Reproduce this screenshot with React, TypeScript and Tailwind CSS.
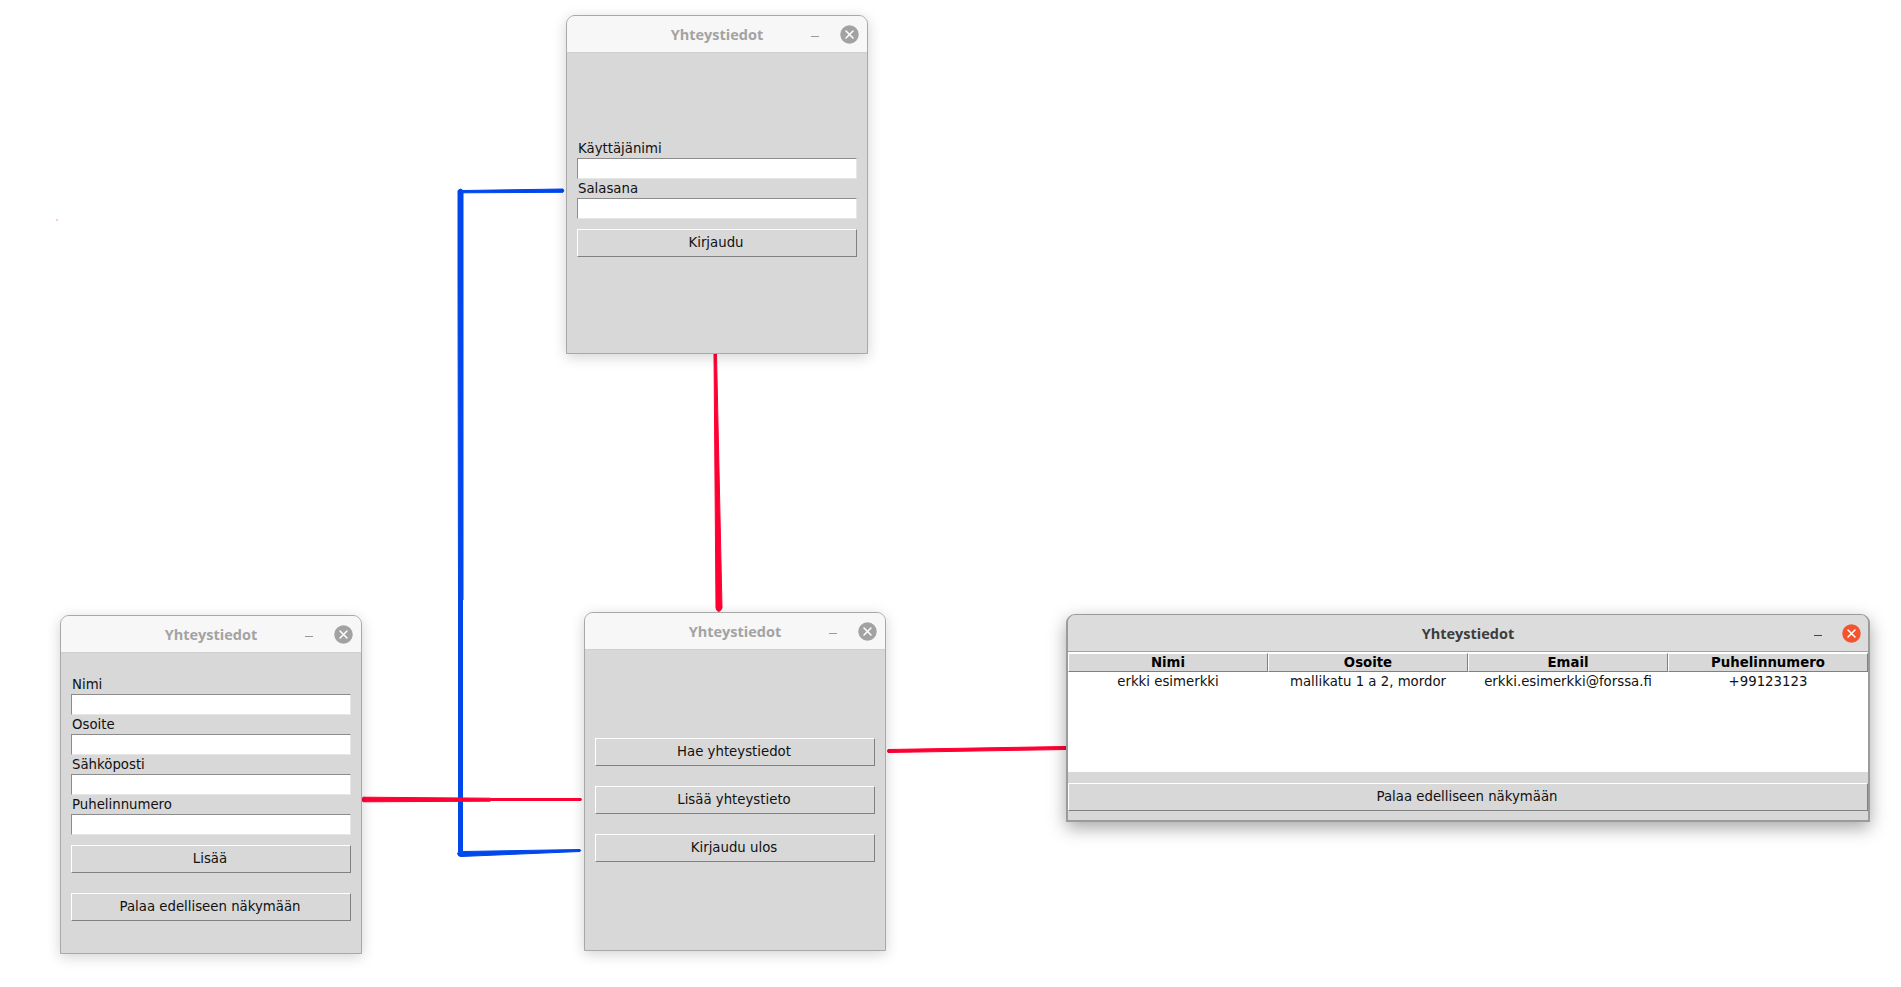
import React from "react";

const uiFont = "font-['DejaVu_Sans',sans-serif] text-[13.3px] text-[#111]";

const CloseIcon = ({ active }: { active?: boolean }) => (
  <svg width="19" height="19" viewBox="0 0 19 19">
    <circle cx="9.5" cy="9.5" r="9.25" fill={active ? "#f2542e" : "#a2a2a2"} />
    <path d="M6 6l7 7M13 6l-7 7" stroke="#fff" strokeWidth="1.5" strokeLinecap="round" />
  </svg>
);

const Window: React.FC<{
  className: string;
  active?: boolean;
  children: React.ReactNode;
}> = ({ className, active, children }) => (
  <div
    className={`absolute flex flex-col rounded-t-[9px] bg-[#d8d8d8] ${
      active
        ? "border-2 border-t border-[#9b9b9b] shadow-[0_6px_18px_rgb(0_0_0/35%)]"
        : "border border-[#a8a8a8] shadow-[0_3px_14px_rgb(0_0_0/18%)]"
    } ${className}`}
  >
    <div
      className={`relative flex h-[37px] shrink-0 items-center justify-center rounded-t-[8px] border-b pt-px font-['Open_Sans',sans-serif] text-[14.5px] font-bold ${
        active ? "border-[#a4a4a4] bg-[#dcdcdc] text-[#3d3d3d]" : "border-[#cfcfcf] bg-[#f7f7f7] text-[#a3a3a3]"
      }`}
    >
      Yhteystiedot
      <span
        className={`absolute top-[20px] h-px w-[8px] ${active ? "right-[46px] bg-[#444]" : "right-[48px] bg-[#9a9a9a]"}`}
      />
      <span className={`absolute top-[9px] flex ${active ? "right-[7px]" : "right-[8.5px]"}`}>
        <CloseIcon active={active} />
      </span>
    </div>
    {children}
  </div>
);

const Field = ({ label }: { label: string }) => (
  <div className="flex flex-col">
    <label className={`h-[19px] pl-px leading-[19px] ${uiFont}`}>{label}</label>
    <div className="h-[21px] border-t border-l border-t-[#8c8c8c] border-l-[#8c8c8c] border-r border-b border-r-[#e6e6e6] border-b-[#e6e6e6] bg-white" />
  </div>
);

const Btn = ({ children, className = "" }: { children: string; className?: string }) => (
  <button
    className={`h-[28px] w-full border border-t-white border-l-white border-r-[#808080] border-b-[#808080] bg-[#d8d8d8] pr-[2px] pb-[1px] leading-none ${uiFont} ${className}`}
  >
    {children}
  </button>
);

const rows = [
  ["Nimi", "erkki esimerkki"],
  ["Osoite", "mallikatu 1 a 2, mordor"],
  ["Email", "erkki.esimerkki@forssa.fi"],
  ["Puhelinnumero", "+99123123"],
];

export default function App() {
  return (
    <div className="relative h-[987px] w-[1901px] overflow-hidden bg-white">
      {/* connector lines between the windows, hand drawn so they taper */}
      <svg className="absolute inset-0" width="1901" height="987" strokeLinejoin="round">
        <g fill="#0047ec" stroke="#0047ec" strokeWidth="1">
          <path d="M458 190.500L460.500 189L463 190.500L563 189Q564.500 190.500 563 192.300L463 192.800V275L463 275V600L462.500 600V851.500L580 849.500Q581.500 850.500 580 851.500L461 856.500Q458 856.500 457.500 853.500L458.500 852V600L458 275Z" />
        </g>
        <g fill="#ff0033" stroke="#ff0033" strokeWidth="1">
          <path d="M363 797.200L490 798.200L491 798.500L581 798.500Q582 799.500 581 800.500L491 800.500L490 801.200L363 801.800Q361 799.500 363 797.200Z" />
          <path d="M888 749.500L1066 746.500Q1067 748 1066 749.500L888 752.500Q887 751 888 749.500Z" />
          <path d="M714 354H716.500L722 608Q720.500 611.500 718.500 611.500Q716.500 611 716 608Z" />
        </g>
        <path d="M56 220H58" stroke="#ff9a9a" strokeWidth="1" />
      </svg>

      <Window className="left-[566px] top-[15px] h-[339px] w-[302px]">
        <div className="flex flex-col px-[10px] pt-[86px]">
          <Field label="Käyttäjänimi" />
          <Field label="Salasana" />
          <Btn className="mt-[10px]">Kirjaudu</Btn>
        </div>
      </Window>

      <Window className="left-[60px] top-[615px] h-[339px] w-[302px]">
        <div className="flex flex-col px-[10px] pt-[22px]">
          <Field label="Nimi" />
          <Field label="Osoite" />
          <Field label="Sähköposti" />
          <Field label="Puhelinnumero" />
          <Btn className="mt-[10px]">Lisää</Btn>
          <Btn className="mt-[20px]">Palaa edelliseen näkymään</Btn>
        </div>
      </Window>

      <Window className="left-[584px] top-[612px] h-[339px] w-[302px]">
        <div className="flex flex-col gap-[20px] px-[10px] pt-[88px]">
          <Btn>Hae yhteystiedot</Btn>
          <Btn>Lisää yhteystieto</Btn>
          <Btn>Kirjaudu ulos</Btn>
        </div>
      </Window>

      <Window active className="left-[1066px] top-[614px] h-[208px] w-[804px]">
        <div className="flex flex-1 flex-col">
          <div className="flex h-[120px] flex-col bg-white">
            <div className={`mt-px grid h-[19px] grid-cols-4 ${uiFont}`}>
              {rows.map(([head]) => (
                <div
                  key={head}
                  className="border-y border-x border-t-white border-l-white border-r-[#808080] border-b-[#808080] bg-[#d8d8d8] text-center font-bold leading-[17px] text-black"
                >
                  {head}
                </div>
              ))}
            </div>
            <div className={`grid h-[19px] grid-cols-4 ${uiFont}`}>
              {rows.map(([head, cell]) => (
                <div key={head} className="text-center leading-[19px]">
                  {cell}
                </div>
              ))}
            </div>
          </div>
          <Btn className="mt-[11px]">Palaa edelliseen näkymään</Btn>
        </div>
      </Window>
    </div>
  );
}
